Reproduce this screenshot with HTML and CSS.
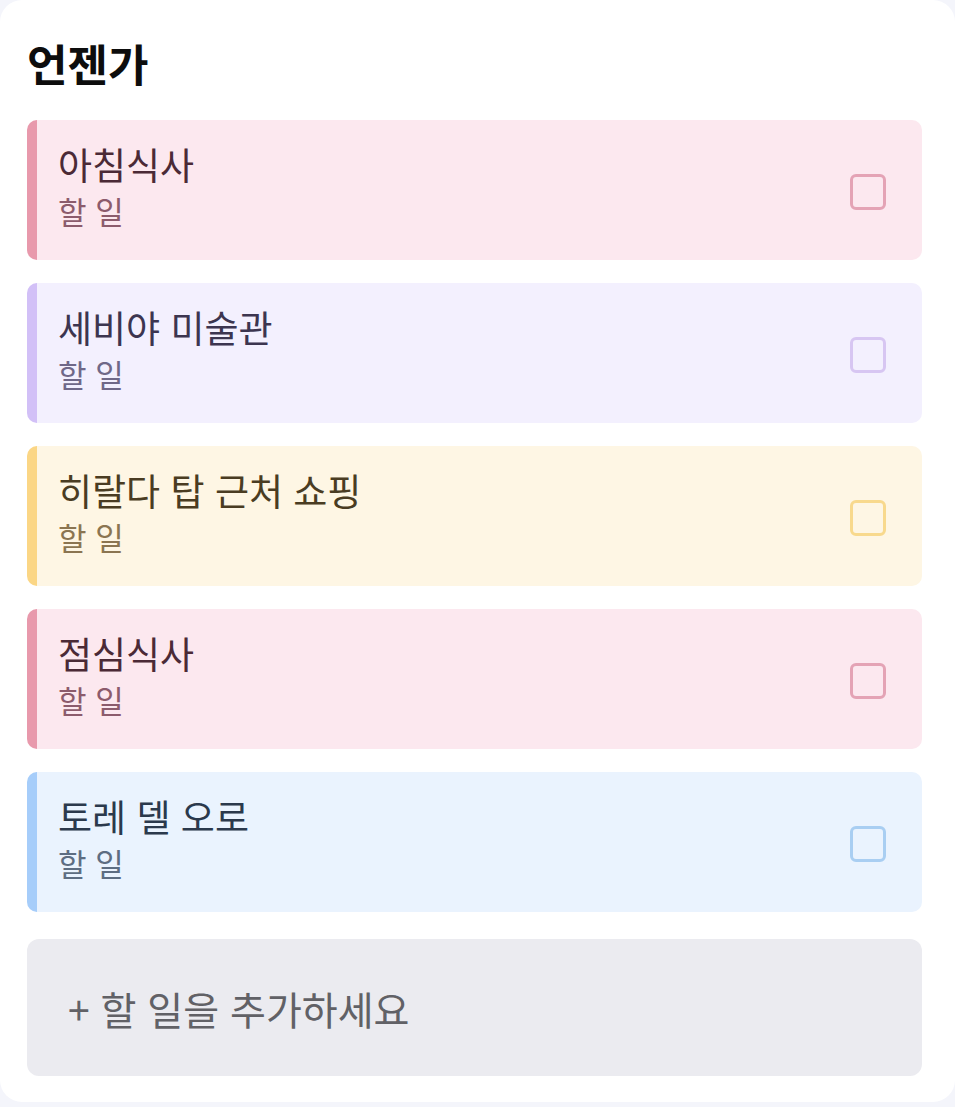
FILE: index.html
```html
<!DOCTYPE html>
<html lang="ko">
<head>
  <meta charset="UTF-8">
  <title>언젠가</title>
  <link rel="stylesheet" href="styles.css">
</head>
<body>
  <div class="card">
    <h1 class="section-title">언젠가</h1>

    <div class="task-list">
      <div class="task task-pink">
        <div class="task-text">
          <span class="task-name">아침식사</span>
          <span class="task-sub">할 일</span>
        </div>
        <span class="task-check"></span>
      </div>

      <div class="task task-purple">
        <div class="task-text">
          <span class="task-name">세비야 미술관</span>
          <span class="task-sub">할 일</span>
        </div>
        <span class="task-check"></span>
      </div>

      <div class="task task-yellow">
        <div class="task-text">
          <span class="task-name">히랄다 탑 근처 쇼핑</span>
          <span class="task-sub">할 일</span>
        </div>
        <span class="task-check"></span>
      </div>

      <div class="task task-pink">
        <div class="task-text">
          <span class="task-name">점심식사</span>
          <span class="task-sub">할 일</span>
        </div>
        <span class="task-check"></span>
      </div>

      <div class="task task-blue">
        <div class="task-text">
          <span class="task-name">토레 델 오로</span>
          <span class="task-sub">할 일</span>
        </div>
        <span class="task-check"></span>
      </div>
    </div>

    <div class="add-task">+ 할 일을 추가하세요</div>
  </div>
</body>
</html>
```

FILE: styles.css
```css
* {
  box-sizing: border-box;
  margin: 0;
  padding: 0;
}

body {
  font-family: "Noto Sans CJK KR", "Noto Sans", sans-serif;
  background: #f4f5fb;
  width: 955px;
  height: 1107px;
  overflow: hidden;
}

.card {
  background: #ffffff;
  border-radius: 22px;
  height: 1102px;
  padding: 36px 33px 0 27px;
}

/* Header */
.section-title {
  font-size: 44px;
  font-weight: 700;
  line-height: 54px;
  color: #0d0d0d;
  margin-bottom: 30px;
}

/* Task list */
.task-list {
  display: flex;
  flex-direction: column;
  gap: 23px;
}

.task {
  height: 140px;
  border-radius: 10px;
  border-left: 10px solid;
  padding: 0 36px 0 21px;
  display: flex;
  align-items: center;
  justify-content: space-between;
}

.task-text {
  display: flex;
  flex-direction: column;
  gap: 4px;
  margin-top: -8px;
}

.task-name {
  font-size: 37px;
  line-height: 46px;
}

.task-sub {
  font-size: 31px;
  line-height: 40px;
}

.task-check {
  width: 36px;
  height: 36px;
  border: 3px solid;
  border-radius: 6px;
  margin-top: 4px;
}

.task-pink {
  background: #fce8ef;
  border-left-color: #e899ac;
}

.task-pink .task-name { color: #4b2a36; }
.task-pink .task-sub { color: #8c5b6c; }
.task-pink .task-check { border-color: #e4a3b5; }

.task-purple {
  background: #f3f0fe;
  border-left-color: #d2c0f7;
}

.task-purple .task-name { color: #3c3550; }
.task-purple .task-sub { color: #6f6888; }
.task-purple .task-check { border-color: #d7c6f2; }

.task-yellow {
  background: #fef6e4;
  border-left-color: #fbd685;
}

.task-yellow .task-name { color: #4a3c22; }
.task-yellow .task-sub { color: #8b7551; }
.task-yellow .task-check { border-color: #f8d98d; }

.task-blue {
  background: #eaf3fe;
  border-left-color: #a6cdfa;
}

.task-blue .task-name { color: #2b394c; }
.task-blue .task-sub { color: #5d6d82; }
.task-blue .task-check { border-color: #a9cef2; }

/* Add task */
.add-task {
  margin-top: 27px;
  height: 137px;
  background: #ebebf0;
  border-radius: 12px;
  padding-left: 41px;
  display: flex;
  align-items: center;
  font-size: 39px;
  color: #616166;
}
```
